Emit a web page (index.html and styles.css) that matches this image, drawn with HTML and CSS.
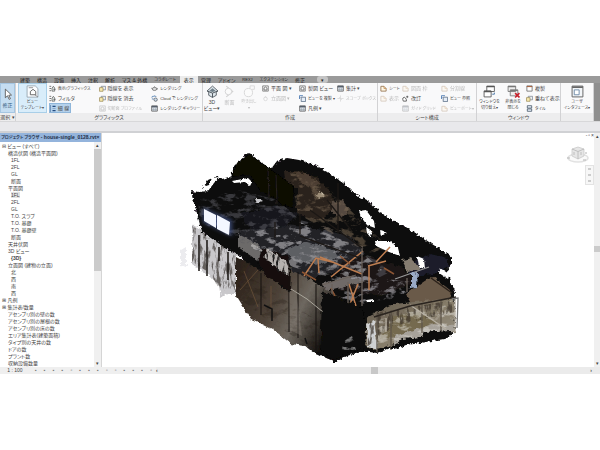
FILE: index.html
```html
<!DOCTYPE html>
<html>
  <head>
    <meta charset="utf-8" />
    <meta name="viewport" content="width=device-width, initial-scale=1.0" />
    <title>house-single_0128.rvt</title>
    <link rel="stylesheet" href="styles.css">
  </head>

  <body>
    <!-- shared icons -->
    <svg class="defs" aria-hidden="true">
      <symbol id="i-doc" viewBox="0 0 8 8">
        <path d="M2.500 1.500h5v4h-5z" fill="#e9edf2" stroke="#77808a" stroke-width=".8" />
        <path d="M.6 3h4v4.200h-4z" fill="#f7e9ae" stroke="#998855" stroke-width=".8" />
      </symbol>
      <symbol id="i-filter" viewBox="0 0 8 8">
        <path d="M.5 1.500h2M.5 4h2M.5 6.500h2" stroke="#555" stroke-width=".9" />
        <path d="M3.500 3.500 5 1.500l1.500 2v3.500h-3zM5 5h2.500" fill="#dfe7e3" stroke="#555" stroke-width=".8" />
      </symbol>
      <symbol id="i-lines" viewBox="0 0 8 8">
        <path d="M1 0v8M4 1.500h3.500M4 6.500h3.500" stroke="#234b80" stroke-width="1.300" />
        <path d="M4 4h3.500" stroke="#7593b8" stroke-width=".8" />
      </symbol>
      <symbol id="i-tea" viewBox="0 0 8 8">
        <ellipse cx="4" cy="4.500" rx="2.500" ry="1.800" fill="#dadada" stroke="#666" stroke-width=".8" />
        <path d="M.2 3.500l1.400 1M6.500 3.500q2 0 .2 2M3.500 2h1" fill="none" stroke="#666" stroke-width=".8" />
      </symbol>
      <symbol id="i-cloud" viewBox="0 0 8 8">
        <path d="M1 3q0-2 2-1.500 2-1.500 3 .8M1 4.500h2" fill="none" stroke="#4a79ad" />
        <circle cx="5.300" cy="5.300" r="1.900" fill="#c9dcef" stroke="#555" stroke-width=".8" />
      </symbol>
      <symbol id="i-table" viewBox="0 0 8 8">
        <path d="M.8 1h6.400v6H.8z" fill="#e8eef5" stroke="#555" stroke-width=".9" />
        <path d="M.8 1h6.400v1.800H.8z" fill="#555f6b" />
        <path d="M3 3v4M5 3v4M1 5h6" stroke="#8a95a0" stroke-width=".6" />
      </symbol>
      <symbol id="i-plan" viewBox="0 0 8 8">
        <path d="M.8 1h6.400v6H.8z" fill="#eee" stroke="#777" stroke-width=".9" />
        <path d="M2.300 5.700V3.500L4 2.300l1.700 1.200v2.200z" fill="#fff" stroke="#555" stroke-width=".8" />
      </symbol>
      <symbol id="i-elev" viewBox="0 0 8 8">
        <path d="M4 .8 6.500 4H1.500z" fill="#aaa" />
        <circle cx="4" cy="4.500" r="2" fill="#fff" stroke="#888" stroke-width=".8" />
      </symbol>
      <symbol id="i-copy" viewBox="0 0 8 8">
        <path d="M2.500 2.500h5v5h-5z" fill="#e5edf7" stroke="#5b6e86" stroke-width=".9" />
        <path d="M.5 4V.8h4M.5 4l1-1M.5 4l-.5-1" fill="none" stroke="#3469a8" stroke-width=".9" />
      </symbol>
      <symbol id="i-scope" viewBox="0 0 8 8">
        <path d="M4 .5v7M.5 4h7M2.500 2.500l3 3" stroke="#999" stroke-width=".9" />
      </symbol>
      <symbol id="i-sheet" viewBox="0 0 8 8">
        <path d="M1 7V1.500h3.500L7 4v3z" fill="#fff8e6" stroke="#8d6b46" stroke-width=".9" />
        <path d="M4.500 1.500V4H7" fill="none" stroke="#c0864b" stroke-width=".8" />
      </symbol>
      <symbol id="i-rev" viewBox="0 0 8 8">
        <path d="M1 3.500q1.500-2 3 0t1 3.500H1.500q-1-2-.5-3.500z" fill="#fff" stroke="#444" stroke-width=".9" />
        <path d="M6 3.500V.8M4.800 2h2.500" stroke="#444" stroke-width=".8" />
      </symbol>
      <symbol id="i-win" viewBox="0 0 8 8">
        <path d="M1 1h6v6H1z" fill="#fff" stroke="#666" stroke-width=".9" />
        <path d="M1 1.200h6v1.200H1z" fill="#a9603e" />
      </symbol>
      <symbol id="i-tile" viewBox="0 0 8 8">
        <path d="M1.500 .8h5v2.700h-5zM1.500 4.500h5v2.700h-5z" fill="#e8f0fa" stroke="#456" stroke-width=".9" />
      </symbol>
    </svg>

    <div class="app">
      <nav class="tabs">
        <button class="tab">建築</button>
        <button class="tab">構造</button>
        <button class="tab">設備</button>
        <button class="tab">挿入</button>
        <button class="tab">注釈</button>
        <button class="tab">解析</button>
        <button class="tab">マス &amp; 外構</button>
        <button class="tab kana">コラボレート</button>
        <button class="tab active">表示</button>
        <button class="tab">管理</button>
        <button class="tab">アドイン</button>
        <button class="tab kana">REXJ</button>
        <button class="tab kana">エクステンション</button>
        <button class="tab">修正</button>
        <button class="tab pill" aria-label="リボン表示">▾</button>
      </nav>

      <div class="ribbon">
        <section class="panel select">
          <div class="tools">
            <button class="big wide on">
              <svg viewBox="0 0 12 12"><path d="M4 1v8l2-1.800L7.500 10.500l1.200-.6L7.200 6.700l2.500-.2z" fill="#fff" stroke="#555" stroke-width=".8" /></svg>
              <span>修正</span>
            </button>
          </div>
          <h2>選択 ▾</h2>
        </section>

        <section class="panel graphics">
          <div class="tools">
            <button class="big hot">
              <svg viewBox="0 0 12 12">
                <path d="M1 .8h7.500l2.500 2.400v8H1z" fill="#fafdff" stroke="#8a97a3" stroke-width=".7" />
                <path d="M4 9V6l2.500-2L9 6v3z" fill="#fff" stroke="#555" stroke-width=".8" />
                <path d="M2.500 2.500h4M8 9l3 2" stroke="#777" stroke-width=".7" />
              </svg>
              <span>ビュー<br>テンプレート▾</span>
            </button>
            <div class="stack">
              <button class="kana"><svg><use href="#i-filter" /></svg>表示/グラフィックス</button>
              <button><svg><use href="#i-filter" /></svg>フィルタ</button>
              <button class="on"><svg><use href="#i-lines" /></svg>細 線</button>
            </div>
            <div class="stack">
              <button><svg><use href="#i-doc" /></svg>隠線を 表示</button>
              <button><svg><use href="#i-doc" /></svg>隠線を 消去</button>
              <button class="kana" disabled><svg><use href="#i-plan" /></svg>切断面 プロファイル</button>
            </div>
            <div class="stack">
              <button class="kana"><svg><use href="#i-tea" /></svg>レンダリング</button>
              <button class="kana"><svg><use href="#i-cloud" /></svg>Cloud で レンダリング</button>
              <button class="kana"><svg><use href="#i-table" /></svg>レンダリング ギャラリー</button>
            </div>
          </div>
          <h2>グラフィックス</h2>
        </section>

        <section class="panel create">
          <div class="tools">
            <button class="big wide">
              <svg viewBox="0 0 12 12">
                <path d="M1 5.500 6 1l5 4.500-1.500.5v3.500L6 11.500 2.500 9.500V6z" fill="#dfe7ec" stroke="#4e565e" stroke-width=".8" />
                <path d="M1 5.500l5 2 5-2M6 7.500v4" fill="none" stroke="#4e565e" stroke-width=".9" />
                <path d="M3 5.500 6 3l3 2.500-3 1z" fill="#6f7f89" />
              </svg>
              <span>3D<br>ビュー▾</span>
            </button>
            <button class="big wide" disabled>
              <svg viewBox="0 0 12 12"><path d="M3 1l6 5-6 5" fill="none" stroke="#888" /><circle cx="5" cy="6" r="3" fill="#fff" stroke="#888" stroke-width=".8" /></svg>
              <span>断面<br>&nbsp;</span>
            </button>
            <button class="big" disabled>
              <svg viewBox="0 0 12 12"><circle cx="5" cy="7" r="3.800" fill="#fff" stroke="#999" stroke-width=".9" /><path d="M6.500 3V.8h4V4H8" fill="none" stroke="#999" stroke-width=".8" /></svg>
              <span>吹き出し<br>▾</span>
            </button>
            <div class="stack">
              <button><svg><use href="#i-plan" /></svg>平面 図 ▾</button>
              <button disabled><svg><use href="#i-elev" /></svg>立面図 ▾</button>
            </div>
            <div class="stack">
              <button><svg><use href="#i-plan" /></svg>製図 ビュー</button>
              <button class="kana"><svg><use href="#i-copy" /></svg>ビューを 複製 ▾</button>
              <button><svg><use href="#i-table" /></svg>凡例 ▾</button>
            </div>
            <div class="stack">
              <button><svg><use href="#i-table" /></svg>集計 ▾</button>
              <button class="kana" disabled><svg><use href="#i-scope" /></svg>スコープ ボックス</button>
            </div>
          </div>
          <h2>作成</h2>
        </section>

        <section class="panel sheets">
          <div class="tools">
            <div class="stack">
              <button class="kana"><svg><use href="#i-sheet" /></svg>シート</button>
              <button disabled><svg><use href="#i-sheet" /></svg>表示</button>
            </div>
            <div class="stack">
              <button disabled><svg><use href="#i-sheet" /></svg>図面 枠</button>
              <button><svg><use href="#i-rev" /></svg>改訂</button>
              <button class="kana" disabled><svg><use href="#i-table" /></svg>ガイド グリッド</button>
            </div>
            <div class="stack">
              <button disabled><svg><use href="#i-sheet" /></svg>分割線</button>
              <button class="kana"><svg><use href="#i-copy" /></svg>ビュー 参照</button>
              <button class="kana" disabled><svg><use href="#i-sheet" /></svg>ビューポート▾</button>
            </div>
          </div>
          <h2>シート構成</h2>
        </section>

        <section class="panel windows">
          <div class="tools">
            <button class="big">
              <svg viewBox="0 0 12 12">
                <path d="M3.500 1h7v5h-7zM1 5.500h6.500v5.500H1z" fill="#fff" stroke="#555" stroke-width=".8" />
                <path d="M3.500 1.500h7M1 6h6.500" stroke="#555" stroke-width="1.200" />
                <path d="M8.500 8.500h2V7" fill="none" stroke="#3d6ea5" stroke-width=".8" />
              </svg>
              <span>ウィンドウを<br>切り替え▾</span>
            </button>
            <button class="big">
              <svg viewBox="0 0 12 12">
                <path d="M1 1h7v5H1zM3 4.500h7V10H3z" fill="#eee" stroke="#777" stroke-width=".8" />
                <path d="M1 1.500h7M3 5h7" stroke="#777" stroke-width="1.200" />
                <path d="M7.500 7.500l4 4m0-4l-4 4" stroke="#c8202c" stroke-width="1.500" />
              </svg>
              <span>非表示を<br>閉じる</span>
            </button>
            <div class="stack">
              <button><svg><use href="#i-win" /></svg>複製</button>
              <button><svg><use href="#i-doc" /></svg>重ねて表示</button>
              <button class="kana"><svg><use href="#i-tile" /></svg>タイル</button>
            </div>
          </div>
          <h2>ウィンドウ</h2>
        </section>

        <section class="panel ui">
          <div class="tools">
            <button class="big">
              <svg viewBox="0 0 12 12">
                <path d="M1 1h10v10H1z" fill="#f2f5f8" stroke="#666" stroke-width=".9" />
                <path d="M1 2h10" stroke="#666" stroke-width="1.500" />
                <path d="M3 4.500h4.500v4.500H3z" fill="#fff" stroke="#6684a2" stroke-width=".8" />
              </svg>
              <span>ユーザ<br>インタフェース▾</span>
            </button>
          </div>
          <h2></h2>
        </section>
      </div>

      <div class="options"></div>

      <main class="work">
        <aside class="browser">
          <header>
            <span><span class="kana">プロジェクト ブラウザ</span> - house-single_0128.rvt</span>
            <button aria-label="閉じる">×</button>
          </header>
          <div class="tree">
            <ul>
              <li class="l0">⊟ ビュー (すべて)</li>
              <li class="l1">構造伏図 (構造平面図)</li>
              <li class="l2">1FL</li>
              <li class="l2">2FL</li>
              <li class="l2">GL</li>
              <li class="l2">断面</li>
              <li class="l1">平面図</li>
              <li class="l2"><mark>1FL</mark></li>
              <li class="l2">2FL</li>
              <li class="l2">GL</li>
              <li class="l2">T.O. スラブ</li>
              <li class="l2">T.O. 基礎</li>
              <li class="l2">T.O. 基礎壁</li>
              <li class="l2">断面</li>
              <li class="l1">天井伏図</li>
              <li class="l1">3D ビュー</li>
              <li class="l2"><b>{3D}</b></li>
              <li class="l1">立面図 (建物の立面)</li>
              <li class="l2">北</li>
              <li class="l2">西</li>
              <li class="l2">南</li>
              <li class="l2">西</li>
              <li class="l0">⊞ 凡例</li>
              <li class="l0">⊞ 集計表/数量</li>
              <li class="l1">アセンブリ別の壁の数</li>
              <li class="l1">アセンブリ別の屋根の数</li>
              <li class="l1">アセンブリ別の床の数</li>
              <li class="l1">エリア集計表(建築面積)</li>
              <li class="l1">タイプ別の天井の数</li>
              <li class="l1">ドアの数</li>
              <li class="l1">プラント数</li>
              <li class="l1">収納設備数量</li>
            </ul>
            <div class="vbar"><span>▴</span><i></i><span>▾</span></div>
          </div>
        </aside>

        <div class="view">
          <svg class="model" viewBox="102 133 492 234" role="img" aria-label="点群モデル">
            <defs>
              <filter id="rough" x="-5%" y="-5%" width="110%" height="110%">
                <feTurbulence type="fractalNoise" baseFrequency=".3" numOctaves="3" seed="4" />
                <feDisplacementMap in="SourceGraphic" scale="5" xChannelSelector="R" yChannelSelector="G" />
                <feGaussianBlur stdDeviation=".3" />
              </filter>
              <filter id="nick" x="-10%" y="-10%" width="120%" height="120%">
                <feTurbulence type="fractalNoise" baseFrequency=".4" numOctaves="2" seed="7" />
                <feDisplacementMap in="SourceGraphic" scale="3" xChannelSelector="R" yChannelSelector="G" />
                <feGaussianBlur stdDeviation=".3" />
              </filter>
              <filter id="soft" x="-10%" y="-10%" width="120%" height="120%">
                <feTurbulence type="fractalNoise" baseFrequency=".2" numOctaves="3" seed="9" />
                <feDisplacementMap in="SourceGraphic" scale="5" xChannelSelector="R" yChannelSelector="G" />
                <feGaussianBlur stdDeviation=".7" />
              </filter>
              <filter id="specks" x="0" y="0" width="100%" height="100%">
                <feTurbulence type="fractalNoise" baseFrequency=".09 .17" numOctaves="5" seed="12" />
                <feColorMatrix values="0 0 0 0 0  0 0 0 0 0  0 0 0 0 0  6 0 0 0 -3" result="n" />
                <feComposite in="SourceGraphic" in2="n" operator="in" />
                <feGaussianBlur stdDeviation=".3" />
              </filter>
              <filter id="streaks" x="0" y="0" width="100%" height="100%">
                <feTurbulence type="fractalNoise" baseFrequency=".3 .08" numOctaves="4" seed="21" />
                <feColorMatrix values="0 0 0 0 0  0 0 0 0 0  0 0 0 0 0  0 5 0 0 -2.4" result="n" />
                <feComposite in="SourceGraphic" in2="n" operator="in" />
                <feGaussianBlur stdDeviation=".3" />
              </filter>
              <filter id="glow" x="-40%" y="-40%" width="180%" height="180%">
                <feGaussianBlur stdDeviation="2" />
              </filter>
              <linearGradient id="wall" gradientUnits="userSpaceOnUse" x1="236" y1="270" x2="345" y2="325">
                <stop offset="0" stop-color="#2b211a" />
                <stop offset=".4" stop-color="#4d4238" />
                <stop offset=".62" stop-color="#6d675f" />
                <stop offset=".78" stop-color="#3c3731" />
                <stop offset=".92" stop-color="#0d0b0a" />
              </linearGradient>
              <linearGradient id="room" x1="0" y1="0" x2="1" y2="1">
                <stop offset="0" stop-color="#5d5449" />
                <stop offset=".5" stop-color="#857b68" />
                <stop offset="1" stop-color="#9b9588" />
              </linearGradient>
            </defs>

            <!-- pale outer wall on the left -->
            <g filter="url(#rough)">
              <path d="M192 224l44 26v44l-9 0-6 4-2-12-9-10-18-12z" fill="#c9c8cb" />
              <path d="M181 250l5-3v20l-5-2z" fill="#ececef" />
            </g>
            <path d="M192 226l44 26v40l-15 0-11-19-18-11z" fill="#4b4643" opacity=".8" filter="url(#streaks)" />
            <path d="M199 235v36M207 240v36M219 247v14M228 252v28" stroke="#171310" stroke-width="1.500" fill="none" />

            <!-- silhouette -->
            <path filter="url(#rough)" fill="#0a090a" d="M191 191l9 1 8-12 9-4 5 3 8-2 5-12 13-12 14 10 9 6 6-8 10-3 12 2 16 5 13 7 11 8 13 10 4 5 11 5 13 12 12 8 22 12 18 12 20 13 0 7-6 7 4 8 5 14v38l-5 5-17 3-21 1-10 7-15 2-10 4-15-2-15 5-13 7-8-9-8-6-8-5-10-4-15-11-14-5-6-5-4-9-17-11v-39l-20-12-22-15z" />

            <!-- burnt interior -->
            <g filter="url(#soft)">
              <path d="M284 171l14 0 18 6 12 12 8 18-17 14-22-8v-25l-12-8z" fill="#2a221b" />
              <path d="M294 172l14 2 12 10-6 6-14-8z" fill="#4c3e31" />
              <path d="M238 234l26-12 40 4 46 10 14 18-28 18-36 8-42-20z" fill="#212227" />
              <path d="M238 234l16 8 20 15 18 11-8 5-20-8-26-18z" fill="#6c6a69" />
              <path d="M250 243l18 8-2 4-14-7z" fill="#a5a3a2" />
              <path d="M284 250l22-8 22 6 14 8-22 8-24-2z" fill="#5d5e63" />
              <path d="M240 214l36-8 24 8-14 12-34 4z" fill="#17181d" />
              <path d="M332 202l10-2 8 10-8 9-10-7z" fill="#54493f" />
              <path d="M319 192l6 3-5 4-5-3z" fill="#c7bba5" />
              <path d="M408 264l22-10 18 4 0 8-14 8-24 2z" fill="#1a1c2a" />
              <path d="M406 294l26-18 18 14 1 8-40 6z" fill="#6b5a49" />
              <path d="M402 260l10-2 8 12-12 2z" fill="#857c70" />
              <path d="M342 262l26-6 36 12 12 14-34 14-44-6z" fill="#1a1612" />
            </g>
            <path d="M198 200l40-10 40 10 22 20 40 10 50 42-20 10-50-18-60-12-60-30z" fill="#55555c" opacity=".6" filter="url(#specks)" />
            <path d="M244 234l56-12 52 22 30 26-36 14-62-20z" fill="#a3a2a5" opacity=".65" filter="url(#specks)" />
            <path d="M290 172l34 12 26 26 40 38-22 6-70-40z" fill="#7a6853" opacity=".55" filter="url(#specks)" />
            <path d="M322 284l40-8 50 6-4 14-46 8-30-6z" fill="#9a989e" opacity=".75" filter="url(#specks)" />
            <path d="M322 283l26-6 18 4-18 4-22 6z" fill="#6f6a68" filter="url(#soft)" />

            <!-- roof sheets -->
            <g filter="url(#nick)">
              <path d="M231 177l6-14 12-9 20 14 25 18-1 22-11-3-8-7-14-7-10-16z" fill="#070706" />
              <path d="M268 168l1 30M276 174l1 30" stroke="#26211d" fill="none" />
              <path d="M232 181l16-3 4 4-2 4-5-4-11 1z" fill="#fff" />
              <path d="M199 192l4-5 6-2 3-7 7-1-5 6-6 8z" fill="#fff" />
              <path d="M255 199l5 0 3 2-6 2z" fill="#c5c5c8" />
              <path d="M359 211l7-1 8 11 1 7-8-3-6-8z" fill="#fff" />
              <path d="M380 230l7 3-6 3zM366 227l6 4-1 7-4-5z" fill="#fff" />
              <path d="M375 241l15 0 8 7 2 8-11-4-13-6z" fill="#fff" />
              <path d="M417 256l7 3 1 10-6-2z" fill="#fff" />
              <path d="M440 268l9 6-1 5-9-6z" fill="#fff" />
              <path d="M366 300l8-1 0 3-7 0z" fill="#fff" />
            </g>

            <!-- window with light -->
            <path d="M203 208l29 12v16l-29-14z" fill="#5a6fb4" opacity=".6" filter="url(#glow)" />
            <path d="M204 209l12 6v13l-12-7zM217 215l13 7-1 13-12-6z" fill="#f4f7ff" />

            <!-- long outer wall -->
            <g filter="url(#soft)">
              <path d="M236 257l26 14 28 22-1-24 20 10 34 20 4 56-16 5-17-7-9-7-14-2-17-14-18-9-5-2-15-24z" fill="url(#wall)" />
              <path d="M262 248l26 8 3 14-1 22-26-18-6-12z" fill="#120f0e" />
              <path d="M268 249l20 13 1 14-7-4-18-14z" fill="#b5b1ae" />
            </g>
            <path d="M266 250l23 12v16l-22-14z" fill="#1f1b1b" filter="url(#streaks)" />
            <path d="M237 270l24 14 30 20 32 20 0 30-30-18-32-20-22-18z" fill="#241b13" opacity=".3" filter="url(#specks)" />
            <path d="M261 273v42M289 268v64M298 272v66M316 284v66" stroke="#14110e" stroke-width="1" fill="none" />
            <path d="M240 290l18-20M244 271l14 36M271 286v24" stroke="#75583c" stroke-width="1" fill="none" opacity=".6" />
            <path d="M264 305l8 4v12M305 338l2 6" stroke="#111" stroke-width="1.500" fill="none" />
            <path d="M291 289l16 10 16 13" stroke="#aaa69c" stroke-width="1" fill="none" />
            <path d="M289 292l7-2 6 46-12-6z" fill="#8b857a" opacity=".35" />

            <!-- timber frame -->
            <g fill="none" stroke="#bd7d50" stroke-width="1.500">
              <path d="M304 276l12-18 16 4M318 259l1 14M320 257l42 17M331 277l32-26" />
              <path d="M369 266v24M368 266l18-5M376 262l14-15M349 284l7 22M358 284l-8 20" />
              <path d="M302 272l14 8M331 288l4 8M340 256l10 8M384 268l10 6" stroke="#8a5433" />
            </g>
            <g fill="none" stroke="#6b625b" stroke-width="1.300">
              <path d="M362 246v60M348 282v22M322 285l34-10M407 278v14M332 284v10" />
              <path d="M395 279l34-12" stroke="#999" />
              <path d="M338 183v50M300 214v20M275 222v16M327 200l24 30M300 236l60 22M310 210l52 38" stroke="#1c1815" />
            </g>
            <path d="M411 274l7-1-1 14-6 1z" fill="#9aabc6" filter="url(#soft)" />

            <!-- open room at the front right -->
            <g filter="url(#soft)">
              <path d="M366 318l28-14 60-6 1 35-30 3-30 8-22 6-8-4z" fill="url(#room)" />
              <path d="M366 324l8-4 4 30-10-3z" fill="#cfd1d3" />
              <path d="M394 316l26-4 16 10-36 14-20 2z" fill="#756b50" />
              <path d="M394 336l38-12 22 2v6l-30 4-30 9z" fill="#a7a29a" />
            </g>
            <path d="M370 318l84-18v30l-76 18z" fill="#e4e2dc" opacity=".5" filter="url(#specks)" />
            <path d="M368 314l86-14v12l-60 14-26 20z" fill="#3a3229" opacity=".7" filter="url(#streaks)" />
            <g fill="none">
              <path d="M377 314v38M391 310v40M422 303v30M441 300v32" stroke="#5f564b" stroke-width="1.300" />
              <path d="M410 305l36 24M386 318v14M455 298v34" stroke="#b7b0a3" stroke-width="1.300" />
              <path d="M374 317l36-11 46-9" stroke="#2a241f" stroke-width="1.500" />
              <path d="M452 299l6-1-1 30" stroke="#777" stroke-width="1.300" />
              <path d="M431 278l21 15" stroke="#2b221b" stroke-width="1.500" />
            </g>
            <path filter="url(#rough)" fill="#080808" d="M390 349l12-10 20-2 2-5 26-2 2 5-8 4-18 3-20 3-12 4z" />
            <path filter="url(#soft)" fill="#0a0908" d="M322 290l12 6 28 12 4 16-1 24-20 5-12 7-12-12z" />
            <path d="M342 342l10-6 4 14-14 0z" fill="#777" filter="url(#specks)" />
          </svg>

          <svg class="cube" viewBox="0 0 24 18" aria-hidden="true">
            <ellipse cx="12" cy="12" rx="10" ry="4" fill="#fafafa" stroke="#e2e2e2" stroke-width="1.500" />
            <path d="M6 3l6-2 6 2v7l-6 3-6-3z" fill="#e6e6e6" stroke="#c4c4c4" stroke-width=".7" />
            <path d="M6 3l6 2.500L18 3M12 5.500V13M8 6v3M15 6v3" fill="none" stroke="#b5b5b5" stroke-width=".8" />
            <path d="M1 12h3M17 14h3M19 7h2" stroke="#b5b5b5" />
          </svg>
          <div class="navbar"><i></i><i></i><i></i></div>
          <div class="winbtns"><button aria-label="最小化">-</button><button aria-label="元に戻す">▫</button><button aria-label="閉じる">×</button></div>
        </div>
        <div class="vbar slim"><span>▴</span><i></i><span>▾</span></div>
      </main>

      <footer class="status">
        <button class="scale">1 : 100</button>
        <div class="modes">
          <button aria-label="詳細レベル">▪</button><button aria-label="表示スタイル">▪</button>
          <button aria-label="太陽の軌跡">▪</button><button aria-label="影">▪</button>
          <button aria-label="レンダリング">▫</button><button aria-label="トリミング">▪</button>
          <button aria-label="領域">▪</button><button aria-label="ロック">▪</button>
          <button aria-label="一時非表示">▫</button><button aria-label="非表示要素">▫</button>
          <button aria-label="プロパティ">▪</button><button aria-label="解析">▪</button>
          <button aria-label="強調">▪</button><button aria-label="拘束">▫</button>
        </div>
        <div class="hbar"><span>‹</span><i></i><span>›</span></div>
      </footer>
    </div>
  </body>
</html>
```

FILE: styles.css
```css
* {
  box-sizing: border-box;
}

body {
  margin: 0;
  background: #fff;
  color: #444;
  font-family: "Liberation Sans", "Noto Sans CJK JP", sans-serif;
  font-size: 5px;
  line-height: 7px;
  font-feature-settings: "palt";
}

button {
  margin: 0;
  padding: 0;
  border: 0;
  background: none;
  color: inherit;
  font: inherit;
  font-feature-settings: inherit;
  white-space: nowrap;
}

button:disabled {
  color: #444;
  opacity: 0.35;
}

h2,
ul {
  margin: 0;
  padding: 0;
  list-style: none;
}

/* labels that are mostly katakana */
.kana {
  font-size: 4px;
}

.defs {
  display: block;
  width: 0;
  height: 0;
}

.app {
  padding-top: 76px;
}

/* tabs */
.tabs {
  display: flex;
  align-items: stretch;
  height: 7px;
  padding-left: 17px;
  background: #9a9a9a;
  color: #222;
  line-height: 6px;
}

.tab {
  padding: 0 4px 0 3px;
}

.tab.active {
  padding: 0 4px;
  background: #ececec;
}

.tab.pill {
  margin-left: 8px;
  padding: 0 4px;
  background: #c4c4c4;
  border-radius: 3px;
}

/* ribbon */
.ribbon {
  display: grid;
  grid-template-columns: 16fr 187fr 175fr 99fr 84fr 33fr;
  padding-right: 6px;
  background: #8f8f8f;
}

.panel {
  display: flex;
  flex-direction: column;
  min-width: 0;
  background: #f9f9fa;
  border-right: 1px solid #d2d2d4;
}

.tools {
  display: grid;
  flex: 1;
  height: 30px;
}

.graphics .tools {
  grid-template-columns: 29fr 50fr 53fr 53fr;
  padding-left: 2px;
}

.create .tools {
  grid-template-columns: 18fr 17fr 22fr 37fr 38fr 42fr;
}

.sheets .tools {
  grid-template-columns: 22fr 39fr 37fr;
}

.windows .tools {
  grid-template-columns: 25fr 22fr 36fr;
}

.panel h2 {
  height: 8px;
  background: #ededee;
  font-size: 5px;
  font-weight: 400;
  line-height: 8px;
  text-align: center;
  white-space: nowrap;
}

.big {
  display: flex;
  flex-direction: column;
  align-items: center;
  justify-content: center;
  gap: 1px;
  min-width: 0;
  font-size: 4px;
  line-height: 6px;
}

.big.wide {
  font-size: 5px;
}

.big svg {
  flex: none;
  width: 13px;
  height: 13px;
}

.big.on {
  background: #c5ddf1;
  border: 1px solid #a5c6e2;
  color: #34597c;
}

.big.hot {
  background: #d9edfa;
  border: 1px solid #a9cfe8;
}

.stack {
  display: grid;
  grid-template-rows: repeat(3, 10px);
  justify-items: start;
  min-width: 0;
  padding-left: 2px;
}

.stack button {
  display: flex;
  align-items: center;
  gap: 2px;
}

.stack svg {
  flex: none;
  width: 7px;
  height: 7px;
}

.stack .on {
  padding-right: 2px;
  background: #b5d2ec;
  outline: 1px solid #8fb6da;
  outline-offset: -1px;
}

.options {
  height: 12px;
  background: #e9e9ec;
  border-top: 1px solid #d8d8da;
  border-bottom: 2px solid #d0d1d4;
}

/* work area */
.work {
  display: flex;
}

.browser {
  flex: 0 0 17%;
  min-width: 0;
  border-right: 1px solid #d5d5d5;
}

.browser header {
  display: flex;
  justify-content: space-between;
  height: 9px;
  padding: 0 2px 0 1px;
  background: #94b4dc;
  color: #1c2c44;
  font-weight: 700;
  line-height: 9px;
  white-space: nowrap;
}

.tree {
  display: flex;
}

.tree ul {
  flex: 1;
  min-width: 0;
  padding-top: 1px;
}

.tree li {
  height: 7px;
  white-space: nowrap;
}

.l0 {
  padding-left: 2px;
}

.l1 {
  padding-left: 8px;
}

.l2 {
  padding-left: 11px;
}

.tree mark {
  background: #e2e2e2;
  color: inherit;
}

.vbar {
  display: flex;
  flex-direction: column;
  width: 7px;
  background: #f0f0f0;
  text-align: center;
}

.vbar i {
  flex: 0 0 54%;
  background: #cbcbcb;
}

.vbar span:last-child {
  margin-top: auto;
}

.vbar.slim {
  width: 6px;
}

.vbar.slim i {
  flex-basis: 6px;
  margin-top: 106px;
}

.view {
  position: relative;
  flex: 1;
  min-width: 0;
}

.model {
  display: block;
  width: 100%;
}

.cube {
  position: absolute;
  top: 13px;
  right: 4px;
  width: 24px;
  height: 18px;
}

.navbar {
  position: absolute;
  top: 32px;
  right: 0;
  display: grid;
  gap: 4px;
  padding: 2px;
  background: #f7f7f7;
  border: 1px solid #e3e3e3;
}

.navbar i {
  width: 3px;
  height: 2px;
  background: #ccc;
}

.winbtns {
  position: absolute;
  top: 0;
  right: 0;
  display: flex;
  gap: 1px;
  line-height: 4px;
}

/* view controls */
.status {
  display: flex;
  height: 7px;
  background: #efefef;
}

.scale {
  flex: 0 0 5%;
  text-align: center;
}

.modes {
  display: flex;
  flex: 0 0 21%;
  justify-content: space-between;
  padding: 0 4px 0 5px;
  color: #777;
}

.hbar {
  display: flex;
  flex: 1;
  background: #ebebeb;
  font-weight: 700;
}

.hbar i {
  width: 7px;
  margin-left: 48%;
  background: #c8c8c8;
}

.hbar span:last-child {
  margin-left: auto;
  padding-right: 8px;
}
```
